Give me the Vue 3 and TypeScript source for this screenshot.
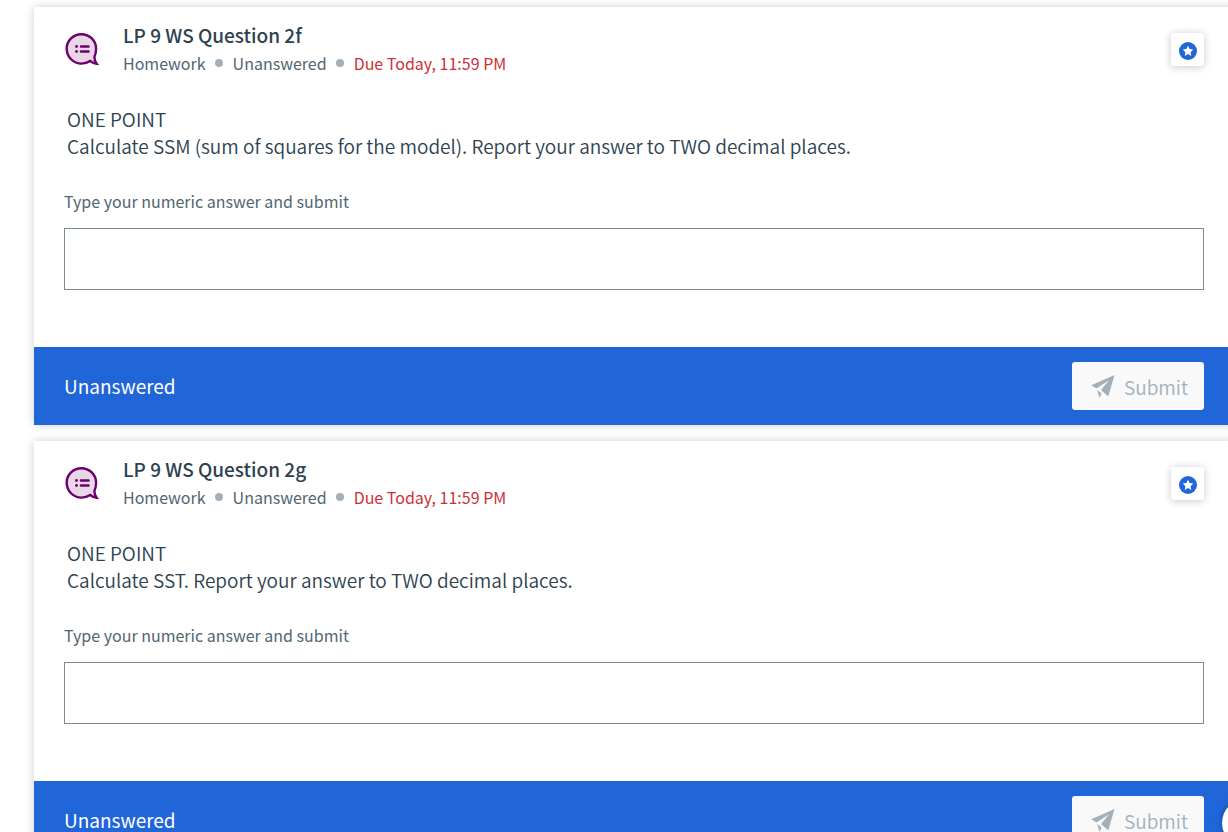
<script setup lang="ts">
interface Question {
  id: string
  title: string
  points: string
  prompt: string
}

const questions: Question[] = [
  {
    id: 'q2f',
    title: 'LP 9 WS Question 2f',
    points: 'ONE POINT',
    prompt: 'Calculate SSM (sum of squares for the model). Report your answer to TWO decimal places.',
  },
  {
    id: 'q2g',
    title: 'LP 9 WS Question 2g',
    points: 'ONE POINT',
    prompt: 'Calculate SST. Report your answer to TWO decimal places.',
  },
]
</script>

<template>
  <main class="page">
    <article v-for="q in questions" :key="q.id" class="card">
      <header class="head">
        <svg class="kind" viewBox="0 0 34 34" aria-hidden="true">
          <path
            d="M16.3 2.200C8.300 2.200 1.700 8.600 1.700 16.800S8.300 31.600 16.500 31.600c3.200 0 6.200-1 8.600-2.600 2 1.500 4.200 2.400 6.500 2.700-1.500-2-2.200-4.300-2.200-6.800 1.100-2.300 1.700-5 1.700-7.900C31.100 8.600 24.500 2.200 16.300 2.200Z"
            fill="#e9d7e8" stroke="#6c006c" stroke-width="2.400" stroke-linejoin="miter"
          />
          <path d="M16 14.500h7.500M16 19.500h7.500" stroke="#6c006c" stroke-width="2.600" stroke-linecap="round" />
          <circle cx="11.500" cy="14.500" r="1.400" fill="#6c006c" />
          <circle cx="11.500" cy="19.500" r="1.400" fill="#6c006c" />
        </svg>
        <div class="heading">
          <h2 class="title">{{ q.title }}</h2>
          <div class="meta">
            <span>Homework</span>
            <span class="dot"></span>
            <span>Unanswered</span>
            <span class="dot"></span>
            <span class="due">Due Today, 11:59 PM</span>
          </div>
        </div>
        <button class="star" type="button" aria-label="Bookmark question">
          <svg viewBox="0 0 18 18" aria-hidden="true">
            <circle cx="9" cy="9" r="9" fill="#2166d9" />
            <path d="M9 3.700l1.600 3.400 3.700.5-2.700 2.600.7 3.700L9 12.100l-3.300 1.800.7-3.700-2.700-2.600 3.700-.5Z" fill="#fff" />
          </svg>
        </button>
      </header>
      <div class="question">
        <p>{{ q.points }}</p>
        <p>{{ q.prompt }}</p>
      </div>
      <div class="answer">
        <label :for="q.id">Type your numeric answer and submit</label>
        <input :id="q.id" type="text" inputmode="decimal" />
      </div>
      <footer class="foot">
        <span class="status">Unanswered</span>
        <button class="submit" type="button" disabled>
          <svg viewBox="0 0 24 24" aria-hidden="true">
            <path d="M23.500 1 .300 11.200 5.500 14.500 18 6.200 10 16 17.300 22.500Z" fill="#a3b0ba" />
            <path d="M6 16.100 8.500 24 10.700 19.400Z" fill="#a3b0ba" />
          </svg>
          Submit
        </button>
      </footer>
    </article>
    <button class="help" type="button" aria-label="Help"></button>
  </main>
</template>

<style>
body {
  margin: 0;
  background: #fff;
}
</style>

<style scoped>
.page {
  box-sizing: border-box;
  height: 100vh;
  overflow: hidden;
  padding: 7px 0 0 34px;
  display: flex;
  flex-direction: column;
  gap: 16px;
  font-family: "Noto Sans CJK SC", "Noto Sans", sans-serif;
  color: #2c4251;
}
.card {
  flex: none;
  margin-right: -8px;
  background: #fff;
  border-radius: 2px;
  box-shadow: 0 0 10px rgba(0, 0, 0, 0.2);
}
.head {
  display: flex;
  align-items: flex-start;
  padding: 14px 32px 0 31px;
}
.kind {
  flex: none;
  width: 34px;
  height: 34px;
  margin: 11px 24px 0 0;
}
.heading {
  flex: 1;
}
.title {
  margin: 0;
  font-size: 19px;
  line-height: 28px;
  font-weight: 500;
}
.meta {
  display: flex;
  align-items: center;
  font-size: 16px;
  line-height: 28px;
  font-weight: 400;
  color: #526572;
}
.dot {
  width: 8px;
  height: 8px;
  margin: 0 10px 0 9px;
  border-radius: 50%;
  background: #a3b0ba;
}
.due {
  color: #cf2f37;
}
.star {
  display: grid;
  place-items: center;
  width: 33px;
  height: 33px;
  margin-top: 12px;
  padding: 2px 0 0;
  border: 0;
  border-radius: 3px;
  background: #fff;
  box-shadow: 0 1px 8px rgba(0, 0, 0, 0.22);
}
.star svg {
  width: 18px;
  height: 18px;
}
.question {
  padding: 28px 33px 0;
  font-size: 19px;
  line-height: 27px;
  font-weight: 350;
}
.question p {
  margin: 0;
}
.answer {
  display: flex;
  flex-direction: column;
  gap: 15px;
  padding: 30px 32px 57px 30px;
}
.answer label {
  font-size: 16px;
  line-height: 24px;
  font-weight: 400;
  color: #526572;
}
.answer input {
  box-sizing: border-box;
  width: 100%;
  height: 62px;
  padding: 0 16px;
  border: 1px solid #7c8b98;
  border-radius: 0;
  background: #fff;
  font: inherit;
  font-size: 19px;
  color: inherit;
}
.foot {
  display: flex;
  align-items: center;
  justify-content: space-between;
  padding: 15px 32px 15px 30px;
  background: #2166d9;
  color: #fff;
  font-size: 19px;
}
.status {
  padding-bottom: 2px;
}
.submit {
  display: flex;
  align-items: center;
  gap: 9px;
  height: 48px;
  padding: 0 16px 0 19px;
  border: 0;
  border-radius: 3px;
  background: #f9f9f9;
  color: #a3b0ba;
  font: inherit;
  font-weight: 350;
}
.submit svg {
  width: 24px;
  height: 24px;
}
.help {
  position: fixed;
  right: -42px;
  bottom: -15px;
  width: 48px;
  height: 48px;
  padding: 0;
  border: 0;
  border-radius: 50%;
  background: #fff;
  box-shadow: 0 0 6px rgba(0, 0, 0, 0.3);
}
</style>
